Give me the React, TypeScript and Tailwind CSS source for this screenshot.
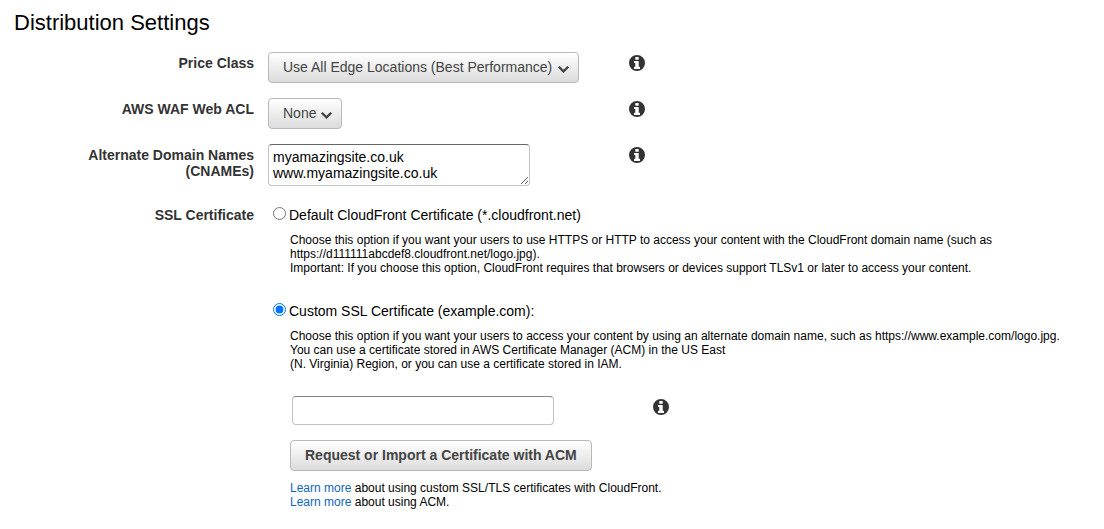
import { useState } from "react";
import type { ReactNode } from "react";

const buttonLook =
  "h-[31px] cursor-pointer rounded-[4px] border border-[#b8b8b8] bg-linear-to-b from-white to-[#dcdcdc] pb-0.5 text-[#444]";

function InfoButton({ topic }: { topic: string }) {
  return (
    <button type="button" aria-label={`About ${topic}`} className="size-4 shrink-0 cursor-pointer text-[#333]">
      <svg viewBox="0 0 16 16" className="size-4" fill="currentColor" aria-hidden="true">
        <path
          fillRule="evenodd"
          d="M8 0a8 8 0 1 1 0 16a8 8 0 1 1 0-16zM6.6 2h2.8q.3 0 .3.3v2.1q0 .3-.3.3H6.6q-.3 0-.3-.3V2.300q0-.3.3-.3zM5.300 6h4.100q.3 0 .3.3v5.400h1q.3 0 .3.3v1.600q0 .3-.3.3H5.300q-.3 0-.3-.3V12q0-.3.3-.3h1V8.100h-1q-.3 0-.3-.3V6.300q0-.3.3-.3z"
        />
      </svg>
    </button>
  );
}

function Dropdown({ id, options }: { id: string; options: string[] }) {
  return (
    <div className="relative inline-block">
      <select id={id} className={`${buttonLook} block appearance-none pr-6 pl-3.5`}>
        {options.map((option) => (
          <option key={option}>{option}</option>
        ))}
      </select>
      <svg
        viewBox="90 533 1612 1035"
        className="pointer-events-none absolute top-3.5 right-2.5 h-[7px] w-[11px] text-[#444]"
        fill="currentColor"
        aria-hidden="true"
      >
        <path d="M1683 808l-742 741q-19 19-45 19t-45-19l-742-741q-19-19-19-45.5t19-45.5l166-165q19-19 45-19t45 19l531 531 531-531q19-19 45-19t45 19l166 165q19 19 19 45.5t-19 45.5z" />
      </svg>
    </div>
  );
}

function Field({ id, label, children }: { id: string; label: string; children: ReactNode }) {
  return (
    <div className="flex gap-3.5">
      <label htmlFor={id} className="w-60 shrink-0 pt-[3px] pl-12 text-right font-bold text-[#333]">
        {label}
      </label>
      <div className="w-[347px]">{children}</div>
      <div className="pt-[3px]">
        <InfoButton topic={label} />
      </div>
    </div>
  );
}

export default function App() {
  const [certificate, setCertificate] = useState("custom");
  const [names, setNames] = useState("myamazingsite.co.uk\nwww.myamazingsite.co.uk");

  return (
    <main className="min-h-screen bg-white pt-2.5 pr-9 pb-5 pl-3.5 font-['Liberation_Sans',Arial,sans-serif] text-[14px] leading-4 text-black">
      <h1 className="text-[22px] leading-[26px]">Distribution Settings</h1>

      <form className="mt-4 flex flex-col gap-[15px]" onSubmit={(event) => event.preventDefault()}>
        <Field id="price-class" label="Price Class">
          <Dropdown id="price-class" options={["Use All Edge Locations (Best Performance)"]} />
        </Field>
        <Field id="web-acl" label="AWS WAF Web ACL">
          <Dropdown id="web-acl" options={["None"]} />
        </Field>
        <Field id="cnames" label="Alternate Domain Names (CNAMEs)">
          <textarea
            id="cnames"
            value={names}
            onChange={(event) => setNames(event.target.value)}
            className="block h-[42px] w-[262px] rounded-[4px] border border-[#c4c4c4] border-t-[#666] px-1 py-1"
          />
        </Field>

        <div role="radiogroup" aria-labelledby="ssl-label" className="mt-[3px] flex gap-3.5">
          <div id="ssl-label" className="w-60 shrink-0 pt-[3px] text-right font-bold text-[#333]">
            SSL Certificate
          </div>
          <div className="min-w-0 flex-1 pt-[3px]">
            <label className="flex">
              <input
                type="radio"
                name="certificate"
                checked={certificate === "default"}
                onChange={() => setCertificate("default")}
                className="mr-[3px] ml-[5px] size-[13px]"
              />
              Default CloudFront Certificate (*.cloudfront.net)
            </label>
            <p className="mt-2.5 ml-[22px] text-[12px] leading-3.5">
              Choose this option if you want your users to use HTTPS or HTTP to access your content with the CloudFront
              domain name (such as https://d111111abcdef8.cloudfront.net/logo.jpg).
              <br />
              Important: If you choose this option, CloudFront requires that browsers or devices support TLSv1 or later
              to access your content.
            </p>

            <label className="mt-7 flex">
              <input
                type="radio"
                name="certificate"
                checked={certificate === "custom"}
                onChange={() => setCertificate("custom")}
                className="mr-[3px] ml-[5px] size-[13px]"
              />
              Custom SSL Certificate (example.com):
            </label>
            <div className="mt-2.5 ml-[22px] text-[12px] leading-3.5">
              <p>
                Choose this option if you want your users to access your content by using an alternate domain name, such
                as https://www.example.com/logo.jpg.
                <br />
                You can use a certificate stored in AWS Certificate Manager (ACM) in the US East
                <br />
                (N. Virginia) Region, or you can use a certificate stored in IAM.
              </p>
              <div className="mt-[25px] ml-0.5 flex">
                <div className="w-[361px]">
                  <input
                    type="text"
                    aria-label="Custom SSL certificate"
                    className="block h-[29px] w-[262px] rounded-[4px] border border-[#c4c4c4] border-t-[#888] px-1 text-[14px]"
                  />
                </div>
                <div className="pt-[3px]">
                  <InfoButton topic="custom SSL certificates" />
                </div>
              </div>
              <button type="button" className={`${buttonLook} mt-[15px] px-3.5 text-[14px] font-bold`}>
                Request or Import a Certificate with ACM
              </button>
              <p className="mt-2.5">
                <a href="#ssl" className="text-[#1166bb]">
                  Learn more
                </a>{" "}
                about using custom SSL/TLS certificates with CloudFront.
                <br />
                <a href="#acm" className="text-[#1166bb]">
                  Learn more
                </a>{" "}
                about using ACM.
              </p>
            </div>
          </div>
        </div>
      </form>
    </main>
  );
}
